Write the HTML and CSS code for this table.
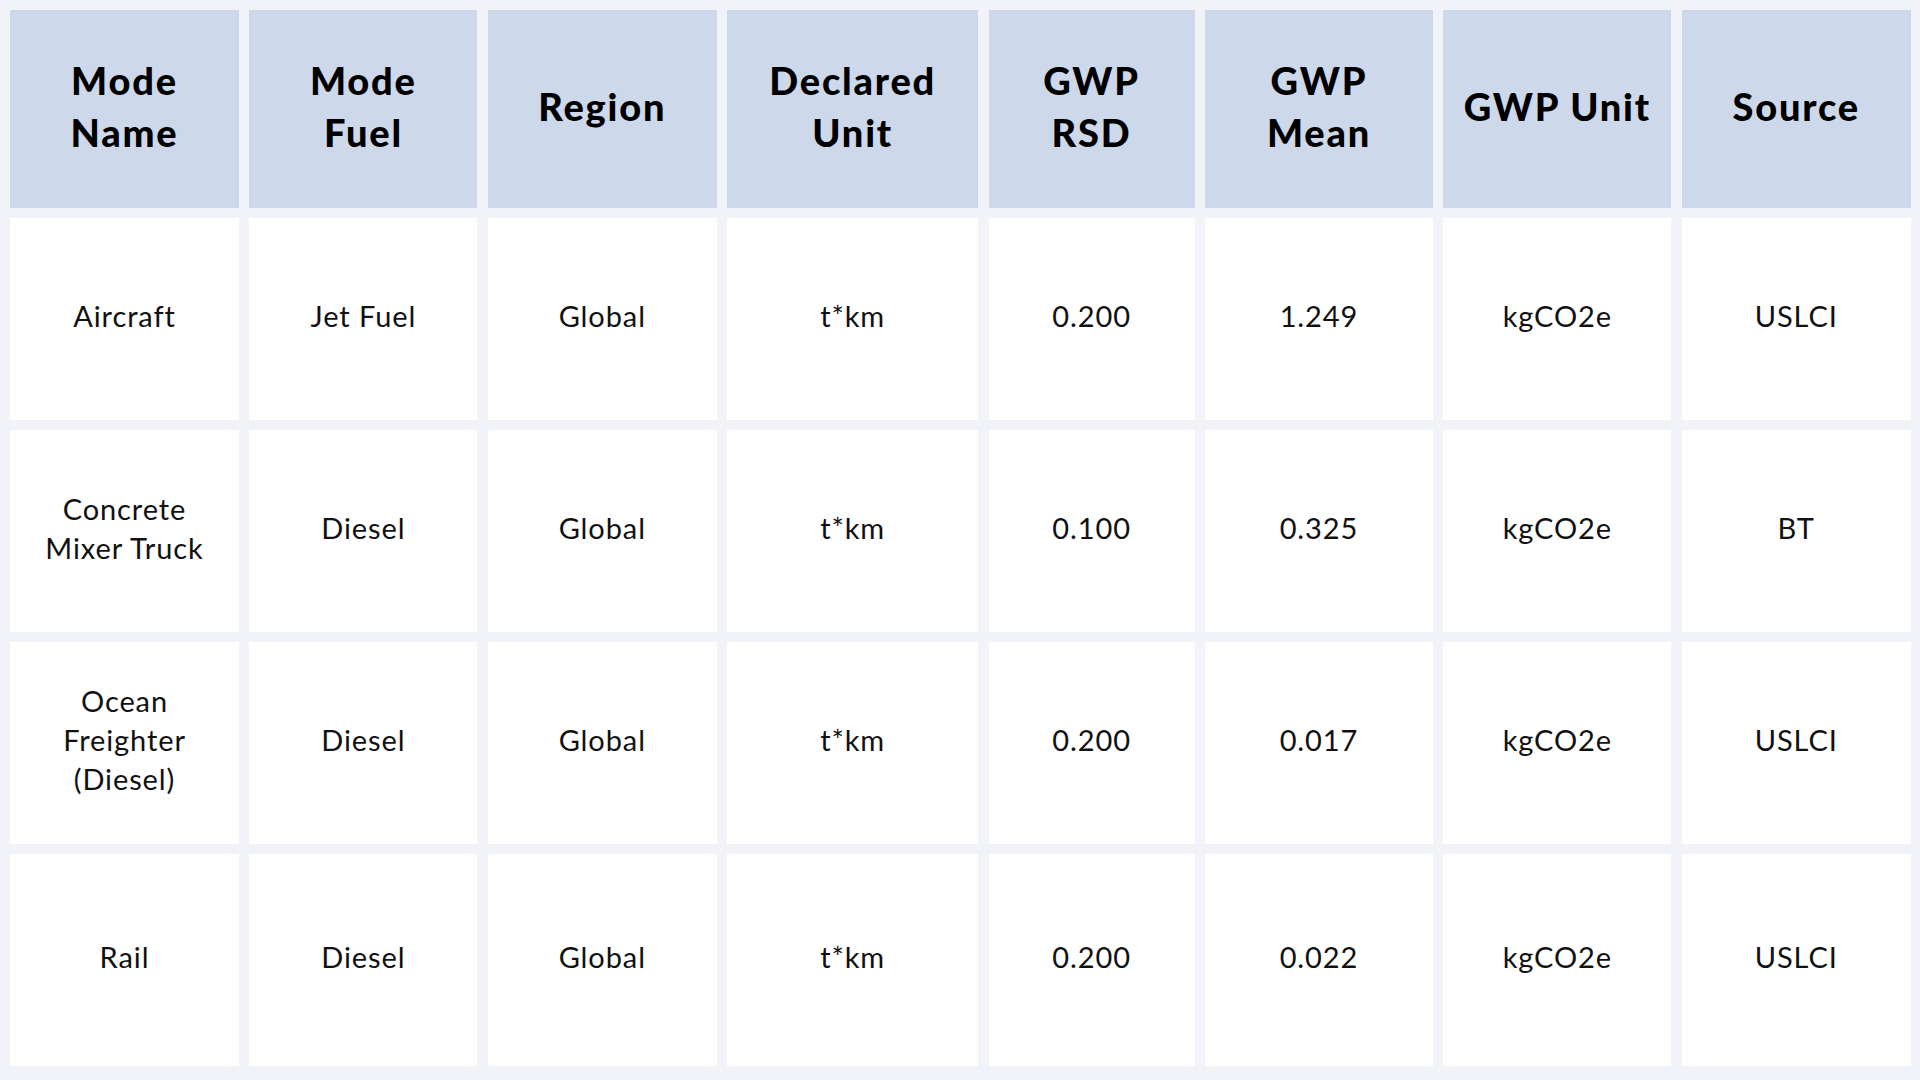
FILE: index.html
```html
<!DOCTYPE html>
<html lang="en">
<head>
<meta charset="utf-8">
<title>Transport Modes GWP</title>
<link rel="stylesheet" href="styles.css">
</head>
<body>
<div class="table">
  <div class="cell head">Mode<br>Name</div>
  <div class="cell head">Mode<br>Fuel</div>
  <div class="cell head">Region</div>
  <div class="cell head">Declared<br>Unit</div>
  <div class="cell head">GWP<br>RSD</div>
  <div class="cell head">GWP<br>Mean</div>
  <div class="cell head">GWP Unit</div>
  <div class="cell head">Source</div>

  <div class="cell">Aircraft</div>
  <div class="cell">Jet Fuel</div>
  <div class="cell">Global</div>
  <div class="cell">t*km</div>
  <div class="cell">0.200</div>
  <div class="cell">1.249</div>
  <div class="cell">kgCO2e</div>
  <div class="cell">USLCI</div>

  <div class="cell">Concrete<br>Mixer Truck</div>
  <div class="cell">Diesel</div>
  <div class="cell">Global</div>
  <div class="cell">t*km</div>
  <div class="cell">0.100</div>
  <div class="cell">0.325</div>
  <div class="cell">kgCO2e</div>
  <div class="cell">BT</div>

  <div class="cell">Ocean<br>Freighter<br>(Diesel)</div>
  <div class="cell">Diesel</div>
  <div class="cell">Global</div>
  <div class="cell">t*km</div>
  <div class="cell">0.200</div>
  <div class="cell">0.017</div>
  <div class="cell">kgCO2e</div>
  <div class="cell">USLCI</div>

  <div class="cell">Rail</div>
  <div class="cell">Diesel</div>
  <div class="cell">Global</div>
  <div class="cell">t*km</div>
  <div class="cell">0.200</div>
  <div class="cell">0.022</div>
  <div class="cell">kgCO2e</div>
  <div class="cell">USLCI</div>
</div>
</body>
</html>
```

FILE: styles.css
```css
html, body {
  margin: 0;
  padding: 0;
  background: #f1f3f9;
}

.table {
  display: grid;
  grid-template-columns: 229px 228px 229px 251px 206px 228px 228px 229px;
  grid-template-rows: 198px 202px 202px 202px 212px;
  column-gap: 10.4px;
  row-gap: 10px;
  padding: 10px;
}

.cell {
  background: #ffffff;
  display: flex;
  align-items: center;
  justify-content: center;
  text-align: center;
  box-sizing: border-box;
  padding-bottom: 7px;
  font-family: "Lato", "Liberation Sans", sans-serif;
  font-size: 29px;
  line-height: 39px;
  color: #111111;
  letter-spacing: 0.9px;
}

.head {
  background: #cdd8ea;
  font-weight: 900;
  font-size: 38px;
  line-height: 52px;
  color: #000000;
  letter-spacing: 1.8px;
  padding-bottom: 6px;
}
```
